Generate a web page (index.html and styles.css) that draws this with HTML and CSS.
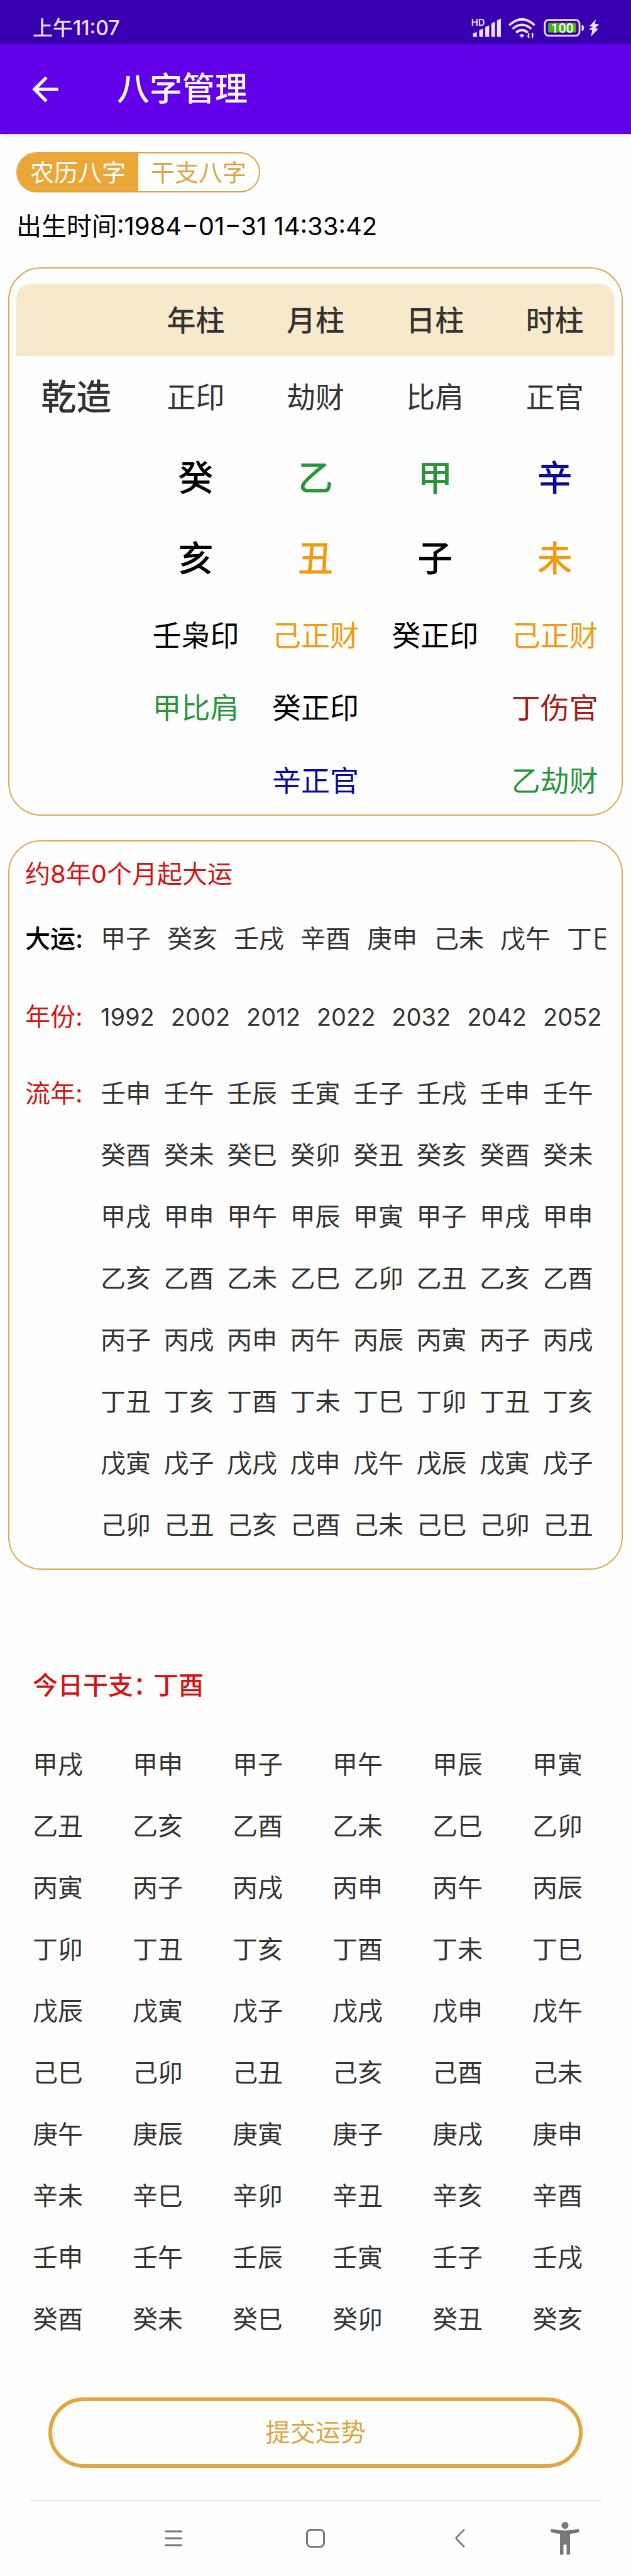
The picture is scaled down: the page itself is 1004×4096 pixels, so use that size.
FILE: index.html
```html
<!DOCTYPE html>
<html lang="zh-CN">
<head>
<meta charset="utf-8">
<meta name="viewport" content="width=device-width, initial-scale=1">
<title>八字管理</title>
<link rel="stylesheet" href="styles.css">
</head>
<body>
<div class="statusbar">
  <span class="clock">上午11:07</span>
  <svg class="status-icons" viewBox="140 86 660 116" role="img" aria-label="信号、无线网络、电量">
    <text class="hd" x="139" y="130">HD</text>
    <g fill="#efe0ff">
      <path d="M148 173q0-3 4-5l16-5v25h-15q-5 0-5-5z"/>
      <path d="M180 157q0-4 4-5l15-6v42h-14q-5 0-5-5z"/>
      <path d="M211 141q0-4 4-6l16-6v59h-15q-5 0-5-5z"/>
      <path d="M242 123q0-4 4-6l15-7v78h-14q-5 0-5-5z"/>
      <path d="M271 107q0-4 4-6l16-7v94h-15q-5 0-5-5z"/>
      <path d="M386 180q12-13 25 0l-12 13z"/>
      <path d="M433 195l-9-14h6v-13h7v27zM452 166l10 14h-6v14h-7v-28z"/>
    </g>
    <g fill="none" stroke="#efe0ff" stroke-width="12">
      <path d="M334 128q65-60 130 0"/>
      <path d="M351 147q48-42 96 0"/>
      <path d="M369 166q30-26 60 0"/>
    </g>
    <rect x="516" y="101" width="178" height="81" rx="20" fill="none" stroke="#efe0ff" stroke-width="9"/>
    <rect x="533" y="117" width="144" height="48" rx="6" fill="#4caf1e"/>
    <path d="M705 127q12 0 12 15t-12 15z" fill="#efe0ff"/>
    <text class="percent" x="606" y="167" text-anchor="middle">100</text>
    <path d="M779 97l-34 36 18 4-22 13 18 4-6 33 37-40-17-4 22-18-22-5z" fill="#efe0ff"/>
  </svg>
</div>
<header class="appbar">
  <button class="back" type="button" aria-label="返回">
    <svg viewBox="0 0 24 24"><path d="M20 11H7.8l5.6-5.6L12 4l-8 8 8 8 1.4-1.4L7.8 13H20z" fill="#fff"/></svg>
  </button>
  <h1>八字管理</h1>
</header>
<main>
  <div class="segmented" role="group" aria-label="八字类型">
    <button class="segment active" type="button" aria-pressed="true">农历八字</button>
    <button class="segment" type="button" aria-pressed="false">干支八字</button>
  </div>
  <p class="birth">出生时间:<time datetime="1984-01-31T14:33:42">1984−01−31 14:33:42</time></p>

  <section class="card chart-card">
    <table class="chart">
      <thead>
        <tr><td></td><th scope="col">年柱</th><th scope="col">月柱</th><th scope="col">日柱</th><th scope="col">时柱</th></tr>
      </thead>
      <tbody>
        <tr class="gods"><th scope="row">乾造</th><td>正印</td><td>劫财</td><td>比肩</td><td>正官</td></tr>
        <tr class="pillar"><td></td><td>癸</td><td class="wood">乙</td><td class="wood">甲</td><td class="metal">辛</td></tr>
        <tr class="pillar"><td></td><td>亥</td><td class="earth">丑</td><td>子</td><td class="earth">未</td></tr>
        <tr class="hidden-stem"><td></td><td>壬枭印</td><td class="earth">己正财</td><td>癸正印</td><td class="earth">己正财</td></tr>
        <tr class="hidden-stem"><td></td><td class="wood">甲比肩</td><td>癸正印</td><td></td><td class="fire">丁伤官</td></tr>
        <tr class="hidden-stem"><td></td><td></td><td class="metal">辛正官</td><td></td><td class="wood">乙劫财</td></tr>
      </tbody>
    </table>
  </section>

  <section class="card luck-card">
    <h2>约8年0个月起大运</h2>
    <div class="luck-row">
      <h3 class="strong">大运:</h3>
      <div class="strip"><span>甲子</span><span>癸亥</span><span>壬戌</span><span>辛酉</span><span>庚申</span><span>己未</span><span>戊午</span><span>丁巳</span></div>
    </div>
    <div class="luck-row">
      <h3>年份:</h3>
      <div class="strip dates"><span>1992</span><span>2002</span><span>2012</span><span>2022</span><span>2032</span><span>2042</span><span>2052</span></div>
    </div>
    <div class="luck-row years">
      <h3>流年:</h3>
      <table>
        <tr><td>壬申</td><td>壬午</td><td>壬辰</td><td>壬寅</td><td>壬子</td><td>壬戌</td><td>壬申</td><td>壬午</td></tr>
        <tr><td>癸酉</td><td>癸未</td><td>癸巳</td><td>癸卯</td><td>癸丑</td><td>癸亥</td><td>癸酉</td><td>癸未</td></tr>
        <tr><td>甲戌</td><td>甲申</td><td>甲午</td><td>甲辰</td><td>甲寅</td><td>甲子</td><td>甲戌</td><td>甲申</td></tr>
        <tr><td>乙亥</td><td>乙酉</td><td>乙未</td><td>乙巳</td><td>乙卯</td><td>乙丑</td><td>乙亥</td><td>乙酉</td></tr>
        <tr><td>丙子</td><td>丙戌</td><td>丙申</td><td>丙午</td><td>丙辰</td><td>丙寅</td><td>丙子</td><td>丙戌</td></tr>
        <tr><td>丁丑</td><td>丁亥</td><td>丁酉</td><td>丁未</td><td>丁巳</td><td>丁卯</td><td>丁丑</td><td>丁亥</td></tr>
        <tr><td>戊寅</td><td>戊子</td><td>戊戌</td><td>戊申</td><td>戊午</td><td>戊辰</td><td>戊寅</td><td>戊子</td></tr>
        <tr><td>己卯</td><td>己丑</td><td>己亥</td><td>己酉</td><td>己未</td><td>己巳</td><td>己卯</td><td>己丑</td></tr>
      </table>
    </div>
  </section>

  <section class="today">
    <h2>今日干支：<span>丁酉</span></h2>
    <ul class="ganzhi">
      <li>甲戌</li><li>甲申</li><li>甲子</li><li>甲午</li><li>甲辰</li><li>甲寅</li>
      <li>乙丑</li><li>乙亥</li><li>乙酉</li><li>乙未</li><li>乙巳</li><li>乙卯</li>
      <li>丙寅</li><li>丙子</li><li>丙戌</li><li>丙申</li><li>丙午</li><li>丙辰</li>
      <li>丁卯</li><li>丁丑</li><li>丁亥</li><li>丁酉</li><li>丁未</li><li>丁巳</li>
      <li>戊辰</li><li>戊寅</li><li>戊子</li><li>戊戌</li><li>戊申</li><li>戊午</li>
      <li>己巳</li><li>己卯</li><li>己丑</li><li>己亥</li><li>己酉</li><li>己未</li>
      <li>庚午</li><li>庚辰</li><li>庚寅</li><li>庚子</li><li>庚戌</li><li>庚申</li>
      <li>辛未</li><li>辛巳</li><li>辛卯</li><li>辛丑</li><li>辛亥</li><li>辛酉</li>
      <li>壬申</li><li>壬午</li><li>壬辰</li><li>壬寅</li><li>壬子</li><li>壬戌</li>
      <li>癸酉</li><li>癸未</li><li>癸巳</li><li>癸卯</li><li>癸丑</li><li>癸亥</li>
    </ul>
  </section>
  <button class="submit" type="button">提交运势</button>
</main>
<nav class="sysnav" aria-label="系统导航">
  <button class="recent" type="button" aria-label="最近任务">
    <svg width="28" height="28" viewBox="0 0 28 28"><path d="M1.500 3h25M1.500 14h25M1.500 25h25" stroke="#777" stroke-width="3" stroke-linecap="round"/></svg>
  </button>
  <button type="button" aria-label="主屏幕">
    <svg width="30" height="30" viewBox="0 0 30 30"><rect x="1.500" y="1.500" width="27" height="27" rx="6" fill="none" stroke="#777" stroke-width="3"/></svg>
  </button>
  <button type="button" aria-label="返回上一页">
    <svg width="18" height="30" viewBox="0 0 18 30"><path d="M16 1L3.500 13.500q-1.500 1.500 0 3L16 29" fill="none" stroke="#777" stroke-width="2.500"/></svg>
  </button>
  <button type="button" aria-label="无障碍">
    <svg width="46" height="52" viewBox="0 0 46 52" fill="#777"><circle cx="23" cy="5.500" r="5.500"/><path d="M1 11q22 5 44 0l1 5q-7 2.500-15 3v33h-5.500V36h-5v16H15V19Q7 18.500 0 16z"/></svg>
  </button>
</nav>
</body>
</html>
```

FILE: styles.css
```css
* {
  box-sizing: border-box;
}

body {
  margin: 0;
  background: #fefefe;
  color: #333;
  font-family: Inter, "Noto Sans CJK SC", sans-serif;
  font-size: 40px;
  line-height: 60px;
}

h1, h2, h3, p, ul {
  margin: 0;
  padding: 0;
  font-size: inherit;
  font-weight: 400;
}

button {
  margin: 0;
  padding: 0;
  border: 0;
  background: none;
  color: inherit;
  font: inherit;
}

svg {
  display: block;
}

table {
  width: 100%;
  border-collapse: collapse;
  table-layout: fixed;
}

th, td {
  padding: 0;
}

/* Status bar */
.statusbar {
  display: flex;
  justify-content: space-between;
  align-items: center;
  height: 70px;
  padding: 19px 49px 0 52px;
  background: #3900b1;
  color: #efe0ff;
}

.clock {
  font-size: 32px;
  font-weight: 500;
  line-height: 50px;
}

.status-icons {
  width: 205px;
  height: 36px;
}

.hd {
  fill: #efe0ff;
  font-size: 48px;
  font-weight: 600;
}

.percent {
  fill: #fff;
  font-family: Roboto, sans-serif;
  font-size: 68px;
  font-weight: 500;
}

/* App bar */
.appbar {
  display: flex;
  align-items: center;
  gap: 83px;
  height: 143px;
  padding-left: 41px;
  background: #6200ea;
  box-shadow: 0 2px 8px rgba(0, 0, 0, 0.15);
  color: #fff;
}

.back svg {
  width: 62px;
  height: 62px;
}

.appbar h1 {
  font-size: 52px;
  font-weight: 500;
}

/* Calendar type switch */
.segmented {
  display: inline-flex;
  margin: 29px 0 0 26px;
  overflow: hidden;
  border: 2px solid #dba546;
  border-radius: 32px;
  vertical-align: top;
}

.segment {
  padding: 0 20px;
  color: #dba546;
  font-size: 38px;
}

.segment.active {
  background: #eaa637;
  color: #fff;
}

.birth {
  margin: 24px 26px 35px;
  color: #000;
}

/* Cards */
.card {
  margin: 0 13px;
  border: 2px solid #d7ab55;
  border-radius: 52px;
}

.chart-card {
  padding: 24px 11px 0;
}

.chart {
  font-size: 46px;
  text-align: center;
}

.chart thead td, .chart thead th {
  height: 115px;
  background: #f9e9cc;
  font-weight: 500;
}

.chart thead td:first-child {
  border-top-left-radius: 24px;
}

.chart thead th:last-child {
  border-top-right-radius: 24px;
}

.gods td, .gods th {
  height: 130px;
}

.gods th {
  font-size: 56px;
  font-weight: 500;
}

.pillar td {
  height: 128px;
  color: #000;
  font-size: 56px;
  font-weight: 500;
}

.hidden-stem td {
  height: 115px;
  color: #000;
}

.hidden-stem:last-child td {
  height: 113px;
  padding-top: 4px;
}

.chart .wood {
  color: #2a963b;
}

.chart .metal {
  color: #0a0a96;
}

.chart .earth {
  color: #f39a14;
}

.chart .fire {
  color: #a02018;
}

/* Luck cycles */
.luck-card {
  margin-top: 39px;
  padding: 22px 25px 20px;
}

.luck-card h2 {
  margin-bottom: 11px;
  color: #d41414;
}

.luck-row {
  display: flex;
  line-height: 124px;
}

.luck-row h3 {
  flex: none;
  width: 120px;
  color: #d41414;
}

.luck-row .strong {
  color: #000;
  font-weight: 500;
}

.strip {
  display: flex;
  flex: 1;
  gap: 26px;
  min-width: 0;
  overflow: hidden;
  white-space: nowrap;
}

.dates {
  font-size: 38px;
}

.years {
  margin-top: 11px;
  line-height: 98px;
}

/* Day pillar */
.today h2 {
  margin: 154px 52px 47px;
  color: #d41414;
  font-weight: 500;
}

.today h2 span {
  margin-left: -8px;
}

.ganzhi {
  display: grid;
  grid-template-columns: repeat(6, max-content);
  justify-content: space-between;
  padding: 0 77px 0 52px;
  line-height: 98px;
  list-style: none;
}

.submit {
  display: block;
  width: calc(100% - 154px);
  height: 112px;
  margin: 75px 77px 51px;
  border: 6px solid #e3a742;
  border-radius: 56px;
  color: #dba546;
}

/* System navigation */
.sysnav {
  display: grid;
  grid-template-columns: 115fr 226fr 226fr 234fr 100fr 7fr;
  height: 119px;
  margin: 0 48px;
  border-top: 2px solid #e3e3e3;
}

.sysnav button {
  display: grid;
  place-items: center;
}

.sysnav .recent {
  grid-column: 2;
}
```
